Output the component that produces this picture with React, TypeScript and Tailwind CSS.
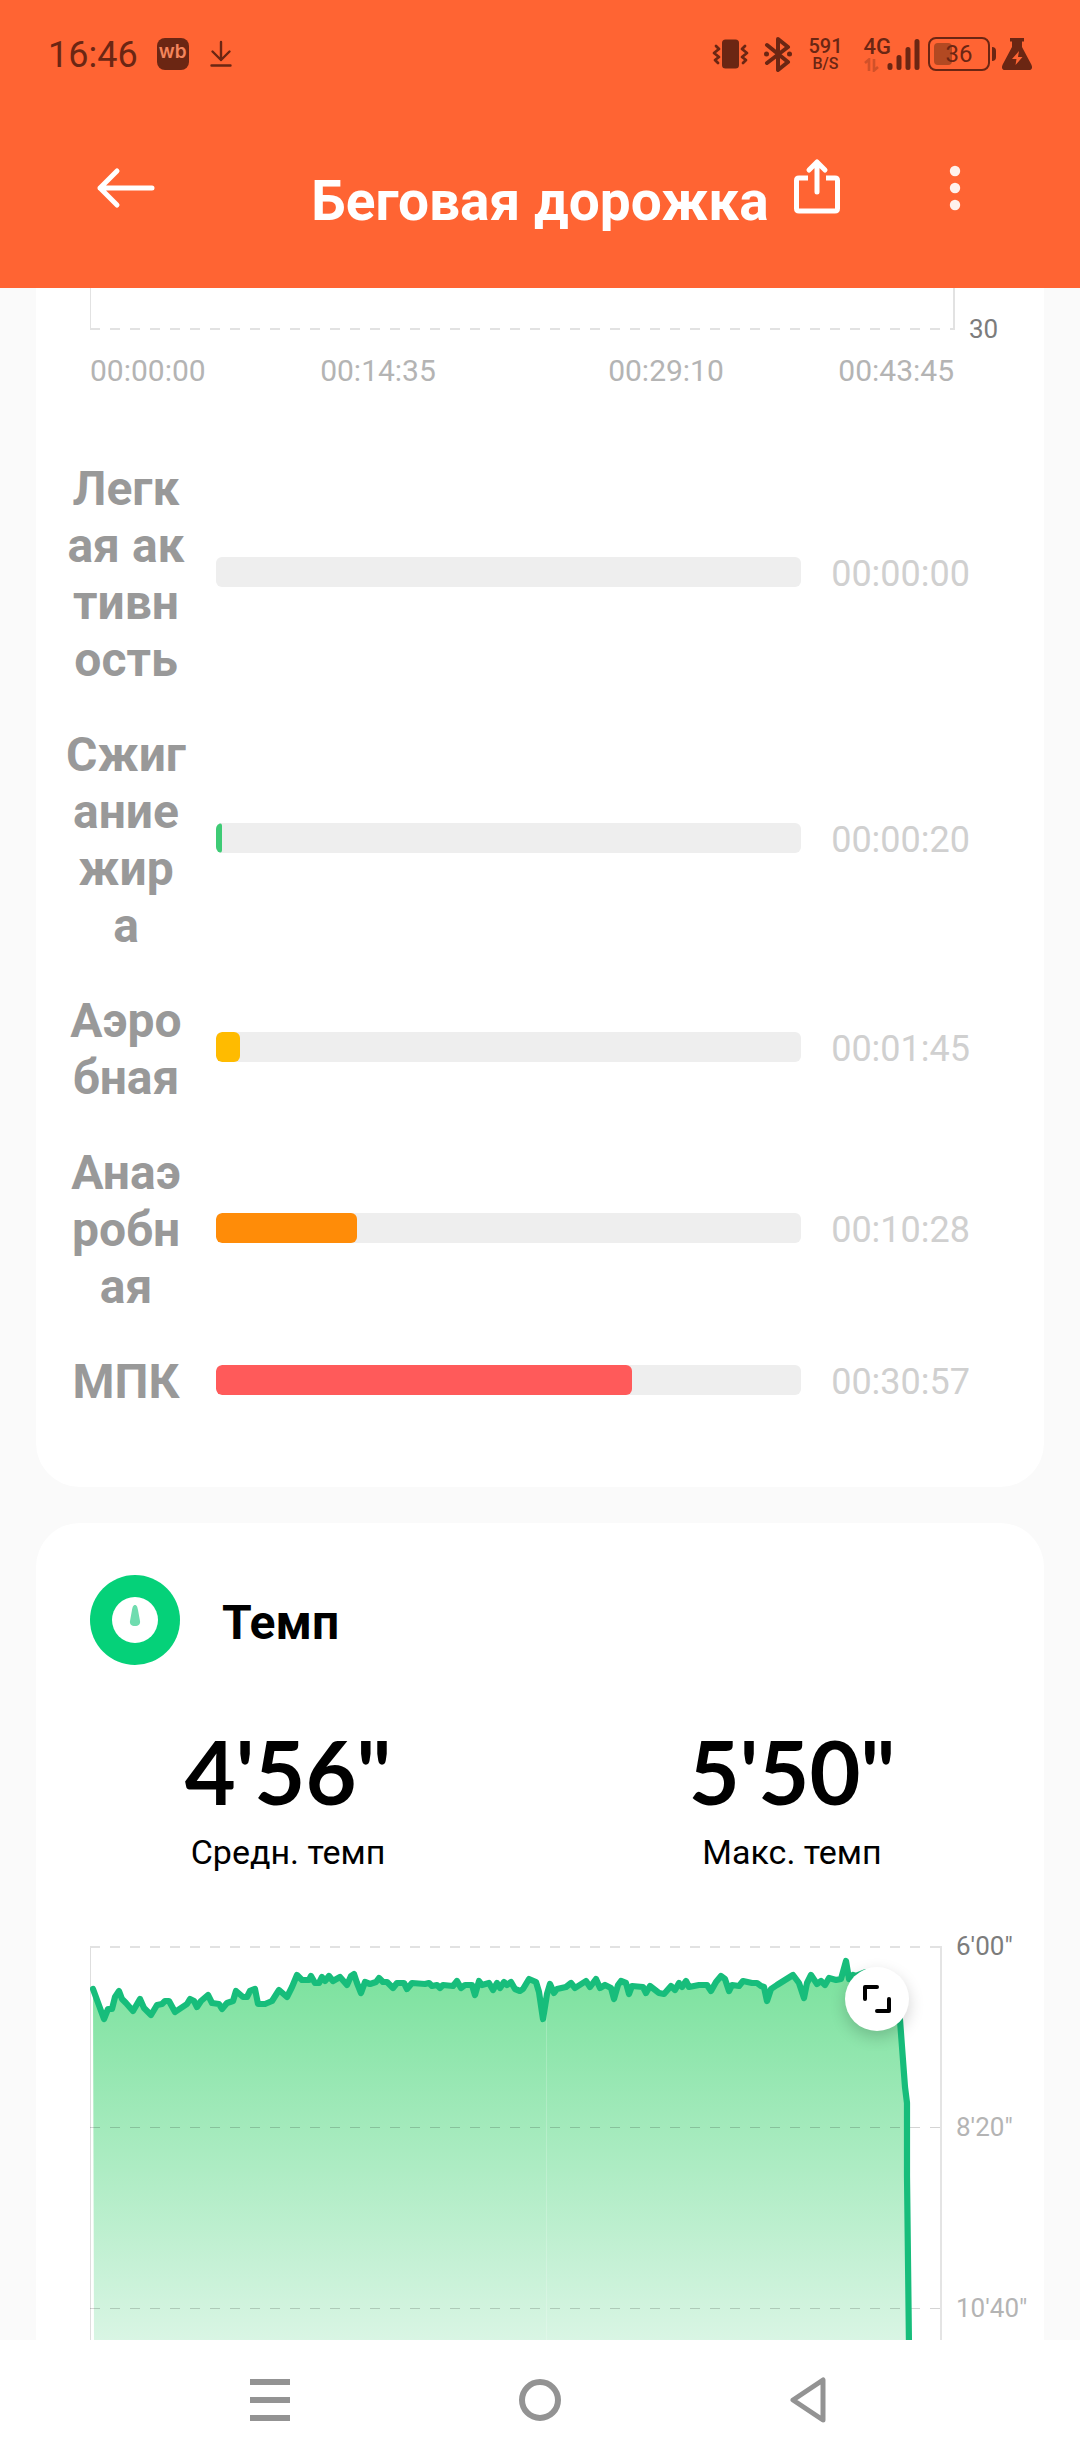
import type { ReactNode } from 'react';

type Zone = { name: string; seconds: number; time: string; color: string };

const zones: Zone[] = [
  { name: 'Легк\nая ак\nтивн\nость', seconds: 0, time: '00:00:00', color: 'bg-[#3b9cff]' },
  { name: 'Сжиг\nание\nжир\nа', seconds: 20, time: '00:00:20', color: 'bg-[#3ecb75]' },
  { name: 'Аэро\nбная', seconds: 105, time: '00:01:45', color: 'bg-[#ffbb00]' },
  { name: 'Анаэ\nробн\nая', seconds: 628, time: '00:10:28', color: 'bg-[#ff8c08]' },
  { name: 'МПК', seconds: 1857, time: '00:30:57', color: 'bg-[#ff5a5a]' },
];

const total = zones.reduce((sum, z) => sum + z.seconds, 0);

const paceTicks = [
  { label: `6'00"`, color: 'text-[#7c7c7c]' },
  { label: `8'20"`, color: 'text-[#b4b4b4]' },
  { label: `10'40"`, color: 'text-[#b4b4b4]' },
];

// x,y pairs in chart units
const pace =
  '3,43 14,73 18,63 22,63 25,51 29,45 32,53 36,57 43,65 50,53 54,62 61,69 67,59 72,58 75,55 79,55 85,66 97,58 100,53 ' +
  '104,55 107,61 111,55 118,49 122,57 129,58 132,63 137,57 143,55 146,45 153,51 157,51 160,45 165,43 168,58 175,58 ' +
  '182,55 189,44 197,51 202,41 207,29 212,34 219,34 221,30 225,37 229,37 232,31 235,35 239,30 243,35 250,31 257,39 ' +
  '261,30 264,28 267,37 271,47 275,36 280,38 286,36 289,32 293,36 297,36 303,42 307,37 314,37 317,43 322,37 335,38 ' +
  '339,37 342,40 347,39 350,42 353,39 363,40 367,35 371,42 375,39 382,39 385,49 389,35 392,39 399,37 403,44 407,37 ' +
  '410,42 414,36 417,39 421,36 425,43 430,45 433,43 439,33 446,36 449,46 453,73 457,48 460,38 464,47 467,43 476,41 ' +
  '481,37 485,42 496,35 500,41 506,33 510,42 515,39 521,42 524,53 528,39 531,35 536,37 539,48 542,40 553,41 556,47 ' +
  '560,40 569,47 574,48 581,40 585,44 589,37 592,41 596,35 599,41 609,39 617,39 621,45 626,36 631,30 635,33 639,45 ' +
  '642,39 649,40 653,35 662,37 667,37 671,40 674,41 677,55 681,43 687,39 703,29 709,37 714,52 717,37 721,29 727,38 ' +
  '731,35 735,39 739,32 746,34 751,33 756,15 759,33 763,29 766,30 776,26 790,30 800,42 805,54 810,74 815,141 817,157 ' +
  '817,230 819,400';

function StatusBar() {
  return (
    <div className="flex h-[108px] items-center justify-between pl-12 pr-12 text-[#6b2613]">
      <div className="flex items-center">
        <span className="pt-0.5 text-[36px] leading-[42px]">16:46</span>
        <span className="ml-[19px] flex size-8 items-center justify-center rounded-lg bg-[#6b2613] pb-1 font-[Inter,sans-serif] text-[19px] font-semibold text-[#f5855c]">
          wb
        </span>
        <svg className="ml-[21px]" width="22" height="28" viewBox="0 0 22 28" fill="none" stroke="currentColor" strokeWidth="2.400" strokeLinecap="round" strokeLinejoin="round">
          <path d="M11 2v18M2.500 11.500l8.500 8.500 8.500-8.500M1.500 25.500h19" />
        </svg>
      </div>

      <div className="flex items-center">
        <svg width="37" height="32" viewBox="0 0 37 32" fill="none" stroke="currentColor" strokeWidth="2.800" strokeLinejoin="round" strokeLinecap="round">
          <rect x="10" y="1.500" width="17" height="29" rx="3.500" fill="currentColor" stroke="none" />
          <path d="M4 8l3 3-5 4 5 4-4 3 3 3M33 8l-3 3 5 4-5 4 4 3-3 3" />
        </svg>
        <svg className="ml-[15px]" width="28" height="36" viewBox="0 0 28 36" fill="none" stroke="currentColor" strokeWidth="4" strokeLinejoin="round" strokeLinecap="round">
          <path d="M3 9l21 17-10 8V3l10 8L3 27" />
          <circle cx="2.500" cy="18" r="2.500" fill="currentColor" stroke="none" />
          <circle cx="25.500" cy="18" r="2.500" fill="currentColor" stroke="none" />
        </svg>
        <div className="ml-4 flex flex-col items-center font-medium">
          <span className="text-[20px] leading-5">591</span>
          <span className="text-[16px] leading-4">B/S</span>
        </div>
        <div className="ml-[21px] flex flex-col">
          <span className="text-[22px] font-medium leading-5">4G</span>
          <svg className="mt-px" width="15" height="14" viewBox="0 0 15 14" fill="none" stroke="currentColor" strokeWidth="2.600" opacity="0.300">
            <path d="M1 5l4-3.500V13M10 1v11.500L14 9" />
          </svg>
        </div>
        <svg className="-ml-1" width="33" height="34" viewBox="0 0 33 34" fill="none" stroke="currentColor" strokeWidth="5" strokeLinecap="round">
          <path d="M3 28.500v2M12 20.500v10M21 12.500v18M30 4.500v26" />
        </svg>
        <div className="relative ml-2 flex h-[34px] w-[62px] items-center justify-center rounded-lg border-2 border-current">
          <span className="absolute inset-y-1 left-1 w-[18px] rounded-sm bg-[#b24922]" />
          <span className="relative text-[24px] leading-7">36</span>
        </div>
        <span className="ml-0.5 h-[14px] w-1 rounded-r-md bg-current" />
        <svg className="ml-1.5" width="30" height="32" viewBox="0 0 30 32" fill="currentColor">
          <path d="M8 0h14v3.500h-2V9l9.300 17.500C31 30 29.500 32 27 32H3C.5 32-1 30 .7 26.500L10 9V3.500H8z" />
          <path d="M17 13l-7 8h4.500l-1 6 7-8H16z" fill="#ff6433" />
        </svg>
      </div>
    </div>
  );
}

function Toolbar() {
  return (
    <div className="grid grid-cols-[1fr_auto_1fr] items-start pb-[54px] pt-[50px]">
      <div className="pl-24">
        <button aria-label="Назад" className="block">
          <svg width="60" height="60" viewBox="0 0 60 60" fill="none" stroke="currentColor" strokeWidth="5" strokeLinecap="round" strokeLinejoin="round">
            <path d="M56 30H4M21 13L4 30l17 17" />
          </svg>
        </button>
      </div>
      <h1 className="mt-2.5 text-[55px] font-bold leading-[66px]">Беговая дорожка</h1>
      <div className="flex justify-between pl-6 pr-[110px]">
        <button aria-label="Поделиться">
          <svg width="48" height="60" viewBox="0 0 48 60" fill="none" stroke="currentColor" strokeWidth="5" strokeLinejoin="round">
            <path d="M15 20H6q-2.500 0-2.500 2.500v28Q3.500 53 6 53h36q2.500 0 2.500-2.500v-28Q44.500 20 42 20h-9" />
            <path d="M24 34V4M16 12l8-8 8 8" strokeLinecap="round" />
          </svg>
        </button>
        <button aria-label="Ещё">
          <svg width="30" height="60" viewBox="0 0 30 60" fill="#fff1ec">
            <circle cx="15" cy="13" r="5.200" />
            <circle cx="15" cy="30" r="5.200" />
            <circle cx="15" cy="47" r="5.200" />
          </svg>
        </button>
      </div>
    </div>
  );
}

function ZoneRow({ zone }: { zone: Zone }) {
  return (
    <li className="flex items-center gap-[26px]">
      <span className="w-32 whitespace-pre-line text-center text-[48px] font-bold leading-[57px] text-[#999]">{zone.name}</span>
      <div className="mb-1 h-[30px] flex-1 overflow-hidden rounded-md bg-[#eee]">
        {zone.seconds > 0 && (
          <div
            className={`h-full min-w-1.5 rounded-md ${zone.color}`}
            style={{ width: `${(zone.seconds / total) * 100}%` }}
          />
        )}
      </div>
      <span className="pl-1 text-[36px] leading-[42px] text-[#d0d0d0]">{zone.time}</span>
    </li>
  );
}

function HeartRateCard() {
  return (
    <section className="rounded-b-[44px] bg-white pb-[77px]">
      <div className="flex pl-[54px]">
        <svg className="h-[43px] min-w-0 flex-1" stroke="#e2e2e2" strokeWidth="2">
          <line x1="0" y1="0" x2="0" y2="42" />
          <line x1="0" y1="41" x2="100%" y2="41" strokeDasharray="10 10" />
          <line x1="100%" y1="0" x2="100%" y2="42" strokeWidth="4" />
        </svg>
        <span className="mt-[26px] w-[89px] pl-3.5 text-[26px] leading-[30px] text-[#7c7c7c]">30</span>
      </div>
      <div className="mt-[7px] grid grid-cols-6 pl-[54px] pr-[90px] text-[30px] leading-10 text-[#b4b4b4]">
        <span>00:00:00</span>
        <span className="col-span-2 text-center">00:14:35</span>
        <span className="col-span-2 text-center">00:29:10</span>
        <span className="text-right">00:43:45</span>
      </div>
      <ul className="mt-[69px] flex flex-col gap-[38px] pl-[26px] pr-[74px]">
        {zones.map((z) => <ZoneRow key={z.name} zone={z} />)}
      </ul>
    </section>
  );
}

function Metric({ value, label }: { value: string; label: string }) {
  return (
    <div className="flex flex-1 flex-col items-center">
      <span className="font-[Lato,sans-serif] text-[88px] font-bold leading-[90px]">{value}</span>
      <span className="mt-4 text-[34px] leading-10">{label}</span>
    </div>
  );
}

function PaceCard() {
  return (
    <section className="rounded-t-[44px] bg-white pt-[52px] text-black">
      <div className="flex items-center gap-[42px] pl-[54px]">
        <svg width="90" height="90" viewBox="0 0 90 90">
          <circle cx="45" cy="45" r="45" fill="#05d179" />
          <circle cx="45" cy="45" r="23" fill="#fff" />
          <path d="M45 30c2 0 2.500 2.500 3 5l2 11c.6 3-1.500 5-5 5s-5.600-2-5-5l2-11c.5-2.500 1-5 3-5z" fill="#6fdcaf" />
        </svg>
        <h2 className="pt-1 text-[48px] font-bold leading-[57px]">Темп</h2>
      </div>

      <div className="mt-[61px] flex">
        <Metric value={`4'56"`} label="Средн. темп" />
        <Metric value={`5'50"`} label="Макс. темп" />
      </div>

      <div className="mt-[59px] flex pl-[54px]">
        <div className="relative mt-[15px] min-w-0 flex-1">
          <svg className="block w-full" viewBox="0 0 852 394" fill="none">
            <defs>
              <linearGradient id="pace" gradientUnits="userSpaceOnUse" x1="0" y1="15" x2="0" y2="394">
                <stop offset="0" stopColor="#79e19c" />
                <stop offset="1" stopColor="#d9f5e4" />
              </linearGradient>
            </defs>
            <path d="M.5 0V394" stroke="#dedede" />
            <path d="M851 0V394" stroke="#e4e4e4" strokeWidth="2" />
            <path d="M0 1H852" stroke="#e2e2e2" strokeWidth="2" strokeDasharray="10 10" />
            <polygon points={`4,400 ${pace}`} fill="url(#pace)" />
            <path d="M456.500 66V394" stroke="#fff" strokeOpacity="0.200" />
            <path d="M0 181.500H852M0 362.500H852" stroke="#000" strokeOpacity="0.170" strokeDasharray="10 10" />
            <polyline points={pace} stroke="#17bd7b" strokeWidth="6.200" strokeLinecap="round" strokeLinejoin="round" />
          </svg>
          <button
            aria-label="Развернуть график"
            className="absolute right-[33px] top-[21px] flex size-16 items-center justify-center rounded-full bg-white shadow-[0_6px_16px_rgba(0,0,0,0.18)]"
          >
            <svg width="28" height="28" viewBox="0 0 28 28" fill="none" stroke="currentColor" strokeWidth="4" strokeLinecap="round" strokeLinejoin="round">
              <path d="M2 14V2h12M26 14v12H14" />
            </svg>
          </button>
        </div>
        <div className="flex w-[102px] flex-col gap-[151px] pl-3.5 text-[26px] leading-[30px]">
          {paceTicks.map((t) => <span key={t.label} className={t.color}>{t.label}</span>)}
        </div>
      </div>
    </section>
  );
}

function NavButton({ label, children }: { label: string; children: ReactNode }) {
  return (
    <button aria-label={label} className="flex flex-1 items-center justify-center">
      <svg width="48" height="48" viewBox="0 0 48 48" fill="none" stroke="currentColor" strokeWidth="6" strokeLinejoin="round">
        {children}
      </svg>
    </button>
  );
}

export default function App() {
  return (
    <div className="flex min-h-screen flex-col bg-[#fafafa] font-[Roboto,sans-serif]">
      <header className="bg-[#ff6433] text-white">
        <StatusBar />
        <Toolbar />
      </header>

      <main className="flex flex-1 flex-col gap-9 px-9">
        <HeartRateCard />
        <PaceCard />
      </main>

      <nav className="flex h-[120px] bg-white px-[135px] text-[#939393]">
        <NavButton label="Недавние">
          <path d="M4 6h40M4 24h40M4 42h40" />
        </NavButton>
        <NavButton label="Домой">
          <circle cx="24" cy="24" r="18" />
        </NavButton>
        <NavButton label="Назад">
          <path d="M37 4v40L7 24z" strokeWidth="5" />
        </NavButton>
      </nav>
    </div>
  );
}
